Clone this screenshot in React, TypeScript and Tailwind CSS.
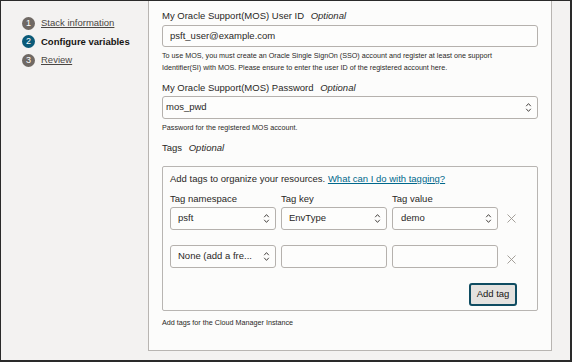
import React from 'react';

const font = { fontFamily: '"Liberation Sans", Arial, sans-serif' };

function UpDown() {
    return (
        <svg width="7" height="11" viewBox="0 0 7 11" className="shrink-0">
            <path d="M1.2 4.2 L3.5 1.6 L5.8 4.2" fill="none" stroke="#4a4643" strokeWidth="1" />
            <path d="M1.2 6.8 L3.5 9.4 L5.8 6.8" fill="none" stroke="#4a4643" strokeWidth="1" />
        </svg>
    );
}

function Close() {
    return (
        <svg width="9" height="9" viewBox="0 0 9 9" className="shrink-0">
            <path d="M0.5 0.5 L8.5 8.5 M8.5 0.5 L0.5 8.5" stroke="#9a958f" strokeWidth="0.9" />
        </svg>
    );
}

function Step({ n, label, active }: { n: number; label: string; active?: boolean }) {
    return (
        <div className="flex flex-row items-center h-[18.5px]">
            <div
                className={
                    'w-[13px] h-[13px] rounded-full flex items-center justify-center text-white text-[9px] leading-none ' +
                    (active ? 'bg-[#0b5a78]' : 'bg-[#6f6964]')
                }>
                {n}
            </div>
            <div
                className={
                    'ml-[6px] text-[9.5px] leading-[12px] ' +
                    (active ? 'font-bold text-[#161513]' : 'underline text-[#4a4643]')
                }>
                {label}
            </div>
        </div>
    );
}

function TagSelect({ value }: { value: string }) {
    return (
        <div className="w-[106px] h-[23px] border border-[#b5b1ad] rounded-[3px] bg-[#fdfdfc] flex flex-row items-center pl-[7px] pr-[5px]">
            <span className="flex-1 text-[9.5px] text-[#2a2826] truncate">{value}</span>
            <UpDown />
        </div>
    );
}

function TagInput({ value }: { value?: string }) {
    return (
        <div className="w-[106px] h-[23px] border border-[#b5b1ad] rounded-[3px] bg-[#fdfdfc] flex flex-row items-center pl-[8px] pr-[5px]">
            <span className="flex-1 text-[9.5px] text-[#2a2826]">{value}</span>
            {value ? <UpDown /> : null}
        </div>
    );
}

export default function App() {
    return (
        <div
            style={font}
            className="w-[572px] h-[362px] overflow-hidden bg-[#f3f2f1] border-t border-l border-r-2 border-b-2 border-[#2a2a2a] flex flex-row text-[#2a2826]">
            <div className="w-[147px] shrink-0 pl-[21px] pt-[13px]">
                <Step n={1} label="Stack information" />
                <Step n={2} label="Configure variables" active />
                <Step n={3} label="Review" />
            </div>
            <div className="w-[404px] h-[350px] shrink-0 bg-[#fcfcfb] border-l border-r border-b border-[#b8b5b2] px-[13px] pt-[9px]">
                <div className="text-[9.5px] leading-[12px]">
                    My Oracle Support(MOS) User ID <span className="italic ml-[4px]">Optional</span>
                </div>
                <div className="mt-[3px] h-[22px] border border-[#b5b1ad] rounded-[3px] bg-[#fdfdfc] flex items-center pl-[7px] text-[9.5px]">
                    psft_user@example.com
                </div>
                <div className="mt-[3px] text-[7.2px] leading-[12px]">
                    To use MOS, you must create an Oracle Single SignOn (SSO) account and register at least one support
                    <br />
                    Identifier(SI) with MOS. Please ensure to enter the user ID of the registered account here.
                </div>
                <div className="mt-[8px] text-[9.5px] leading-[12px]">
                    My Oracle Support(MOS) Password <span className="italic ml-[4px]">Optional</span>
                </div>
                <div className="mt-[2px] h-[23px] border border-[#b5b1ad] rounded-[3px] bg-[#fdfdfc] flex flex-row items-center pl-[3px] pr-[5px]">
                    <span className="flex-1 text-[9.5px]">mos_pwd</span>
                    <UpDown />
                </div>
                <div className="mt-[3px] text-[7.2px] leading-[11px]">Password for the registered MOS account.</div>
                <div className="mt-[9px] text-[9.5px] leading-[12px]">
                    Tags <span className="italic ml-[4px]">Optional</span>
                </div>
                <div className="mt-[12px] h-[145px] border border-[#b8b5b2] rounded-[2px] pl-[7px] pt-[6px]">
                    <div className="text-[9.5px] leading-[12px]">
                        Add tags to organize your resources.{' '}
                        <span className="underline text-[#00688c]">What can I do with tagging?</span>
                    </div>
                    <div className="mt-[8px] flex flex-row gap-[5px] text-[9.5px] leading-[12px]">
                        <div className="w-[106px]">Tag namespace</div>
                        <div className="w-[106px]">Tag key</div>
                        <div className="w-[106px]">Tag value</div>
                    </div>
                    <div className="mt-[2px] flex flex-row items-center gap-[5px]">
                        <TagSelect value="psft" />
                        <TagSelect value="EnvType" />
                        <TagInput value="demo" />
                        <div className="ml-[4px]">
                            <Close />
                        </div>
                    </div>
                    <div className="mt-[15px] flex flex-row items-center gap-[5px]">
                        <TagSelect value="None (add a fre..." />
                        <TagInput />
                        <TagInput />
                        <div className="ml-[4px] mt-[5px]">
                            <Close />
                        </div>
                    </div>
                    <div className="w-[347px] flex flex-row justify-end mt-[15px]">
                        <button className="h-[23px] w-[48px] rounded-[3px] border-2 border-[#0f4c61] bg-[#e4e2df] text-[9.5px] text-[#161513]">
                            Add tag
                        </button>
                    </div>
                </div>
                <div className="mt-[6px] text-[7.2px] leading-[11px]">Add tags for the Cloud Manager Instance</div>
            </div>
        </div>
    );
}
